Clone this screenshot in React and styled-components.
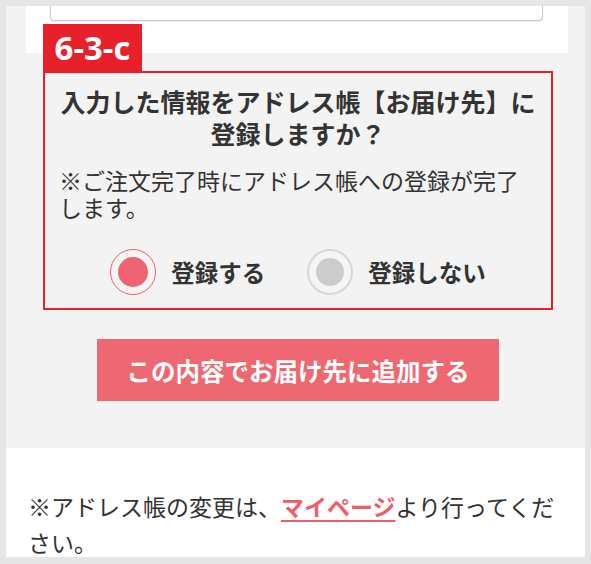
import React, { useState } from "react"
import styled, { createGlobalStyle } from "styled-components"

const GlobalStyle = createGlobalStyle`
  html, body {
    margin: 0;
    padding: 0;
  }
  body {
    background: #e6e6e6;
    font-family: "Noto Sans CJK JP", "Noto Sans", sans-serif;
    color: #333;
  }
`

const Frame = styled.div`
  width: 591px;
  height: 564px;
  box-sizing: border-box;
  padding: 6px 6px 7px;
  overflow: hidden;
`

const Screen = styled.div`
  height: 100%;
  overflow: hidden;
  background: #f3f3f3;
`

const TopCard = styled.div`
  margin: 0 17px 0 20px;
  height: 47px;
  box-sizing: border-box;
  padding: 0 25px 0 24px;
  background: #fff;
`

const InputStub = styled.div`
  height: 14px;
  background: #fff;
  border: 1px solid #c9c9c9;
  border-top: none;
  border-radius: 0 0 4px 4px;
  box-shadow: 0 1px 1px rgba(0, 0, 0, 0.08);
`

const Section = styled.div`
  margin: 18px 32px 47px 37px;
`

const Confirm = styled.div`
  position: relative;
  border: 2px solid #e8212b;
  padding: 12px 0 13px;
`

const Tag = styled.div`
  position: absolute;
  left: -2px;
  top: -49px;
  width: 99px;
  height: 47px;
  background: #e8202a;
  color: #fff;
  font-family: "Open Sans", "Noto Sans", sans-serif;
  font-weight: 700;
  font-size: 33px;
  line-height: 47px;
  text-align: center;
`

const Title = styled.h2`
  margin: 0;
  font-size: 25px;
  font-weight: 700;
  line-height: 32px;
  text-align: center;
  color: #333;
`

const Note = styled.p`
  margin: 18px 0 0;
  padding: 0 14px;
  font-size: 23px;
  line-height: 27px;
`

const Choices = styled.div`
  display: flex;
  justify-content: center;
  align-items: center;
  gap: 42px;
  margin-top: 28px;
`

const Choice = styled.label`
  display: flex;
  align-items: center;
  gap: 15px;
  font-size: 23.5px;
  font-weight: 700;
  cursor: pointer;
`

const Circle = styled.span`
  box-sizing: border-box;
  width: 46px;
  height: 46px;
  border-radius: 50%;
  border: ${(p) => (p.$checked ? "1.5px solid #ec5d68" : "2px solid #d6d6d6")};
  background: #f5f5f5;
  display: flex;
  align-items: center;
  justify-content: center;

  &::after {
    content: "";
    width: ${(p) => (p.$checked ? "30px" : "28px")};
    height: ${(p) => (p.$checked ? "30px" : "28px")};
    border-radius: 50%;
    background: ${(p) => (p.$checked ? "#ee6470" : "#cccccc")};
  }
`

const SubmitButton = styled.button`
  display: block;
  width: 402px;
  height: 62px;
  margin: 29px auto 0;
  border: none;
  background: #ee6871;
  color: #fff;
  font-family: "Noto Sans CJK JP", sans-serif;
  font-size: 24.5px;
  font-weight: 700;
  cursor: pointer;
`

const Footer = styled.div`
  background: #fff;
  padding: 40px 22px;
  font-size: 23px;
  line-height: 36px;
`

const PageLink = styled.a`
  color: #ef5d68;
  font-weight: 700;
  text-decoration: underline;
  text-decoration-thickness: 2px;
  text-underline-offset: 4px;
`

export default function App() {
  const [register, setRegister] = useState(true)

  return (
    <>
      <GlobalStyle />
      <Frame>
        <Screen>
          <TopCard>
            <InputStub />
          </TopCard>
          <Section>
            <Confirm>
              <Tag>6-3-c</Tag>
              <Title>
                入力した情報をアドレス帳【お届け先】に
                <br />
                登録しますか？
              </Title>
              <Note>※ご注文完了時にアドレス帳への登録が完了します。</Note>
              <Choices>
                <Choice onClick={() => setRegister(true)}>
                  <Circle $checked={register} />
                  登録する
                </Choice>
                <Choice onClick={() => setRegister(false)}>
                  <Circle $checked={!register} />
                  登録しない
                </Choice>
              </Choices>
            </Confirm>
            <SubmitButton>この内容でお届け先に追加する</SubmitButton>
          </Section>
          <Footer>
            ※アドレス帳の変更は、<PageLink href="#">マイページ</PageLink>より行ってください。
          </Footer>
        </Screen>
      </Frame>
    </>
  )
}
